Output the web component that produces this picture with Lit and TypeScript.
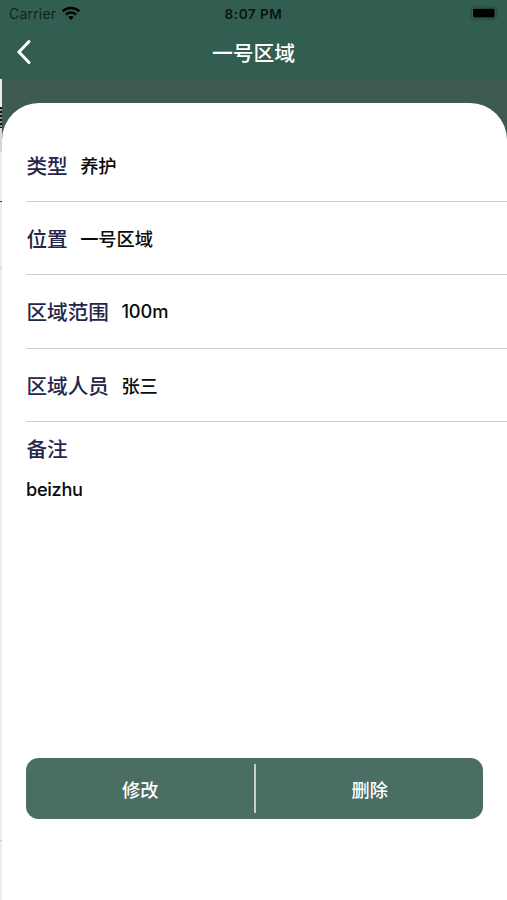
import { LitElement, html, css } from "lit";
import { customElement, property } from "lit/decorators.js";

@customElement("status-bar")
class StatusBar extends LitElement {
  static styles = css`
    :host {
      display: grid;
      grid-template-columns: 1fr auto 1fr;
      align-items: center;
      height: 27px;
      padding: 0 7px 0 9px;
      box-sizing: border-box;
      color: #0a1512;
      font-size: 14px;
    }
    .carrier {
      display: flex;
      align-items: center;
      gap: 5px;
      letter-spacing: 0.2px;
      color: #11241e;
    }
    .time {
      font-weight: 600;
      font-size: 13.6px;
      letter-spacing: 0.5px;
      margin: 0 2px 0 0;
    }
    .battery {
      justify-self: end;
      display: block;
    }
    svg {
      display: block;
    }
  `;
  render() {
    return html`
      <div class="carrier">
        <span>Carrier</span>
        <svg width="20" height="15" viewBox="0 0 20 15" fill="none" stroke="#000" stroke-width="2.5">
          <path d="M1.7 5.3C6.3 .9 13.7 .9 18.3 5.3" />
          <path d="M4.9 8.6C7.8 5.9 12.2 5.9 15.1 8.6" />
          <path d="M10 14 7.2 11.1C8.8 9.7 11.2 9.7 12.8 11.1Z" fill="#000" stroke="none" />
        </svg>
      </div>
      <div class="time">8:07 PM</div>
      <svg class="battery" width="31" height="15" viewBox="0 0 31 15">
        <rect x="2" y="0.9" width="25.6" height="12.6" rx="3.8" fill="none" stroke="#264f43" stroke-width="1.3" />
        <rect x="4" y="2.7" width="21.6" height="8.8" rx="1.4" fill="#000" />
        <path d="M29 5.2Q30.7 7 29 8.8Z" fill="#264f43" />
      </svg>
    `;
  }
}

@customElement("detail-row")
class DetailRow extends LitElement {
  @property() label = "";
  @property() value = "";
  static styles = css`
    :host {
      display: flex;
      align-items: center;
      gap: 12.5px;
      height: 73.35px;
      padding-left: 0.5px;
      box-sizing: border-box;
      border-bottom: 1.3px solid #cbcfcf;
    }
    .label {
      font-size: 20.6px;
      color: #26264c;
    }
    .value {
      font-size: 18.3px;
      letter-spacing: -0.1px;
      color: #0b0b0b;
    }
  `;
  render() {
    return html`<span class="label">${this.label}</span><span class="value">${this.value}</span>`;
  }
}

@customElement("app-root")
class AppRoot extends LitElement {
  static styles = css`
    :host {
      display: flex;
      flex-direction: column;
      height: 900px;
      overflow: hidden;
      background: #325e51;
      font-family: Inter, "Noto Sans CJK SC", sans-serif;
      font-weight: 500;
    }
    status-bar {
      font-weight: 400;
    }
    .nav {
      display: grid;
      grid-template-columns: 60px 1fr 60px;
      align-items: center;
      height: 52px;
      color: #fff;
      font-size: 20.8px;
      text-align: center;
    }
    .title {
      padding-bottom: 2px;
    }
    .back {
      display: block;
      margin: 0 0 2px 15px;
    }
    .body {
      flex: 1;
      display: flex;
      min-height: 0;
    }
    .edge {
      flex: 0 0 2px;
      background:
        linear-gradient(#333, #333) 0 122px / 2px 1px no-repeat,
        linear-gradient(#d0d0d0, #d0d0d0) 0 189px / 2px 1px no-repeat,
        linear-gradient(#d0d0d0, #d0d0d0) 0 761px / 2px 1px no-repeat,
        repeating-linear-gradient(#111 0 2px, #8a9590 2px 4px) 0 28px / 2px 21px no-repeat,
        linear-gradient(#d6d8d7, #d6d8d7) 0 49px / 2px 24px no-repeat,
        #ececec;
    }
    .backdrop {
      flex: 1;
      display: flex;
      padding-top: 24.3px;
      background: #3d5b51;
    }
    .sheet {
      flex: 1;
      display: flex;
      flex-direction: column;
      padding: 25.2px 0 0 24px;
      background: #fff;
      border-radius: 37px 37px 0 0;
    }
    .note-label {
      margin-top: 12px;
      padding-left: 0.5px;
      font-size: 20.6px;
      line-height: 31px;
      color: #26264c;
    }
    .note {
      margin-top: 12px;
      font-size: 18.2px;
      letter-spacing: -0.3px;
      line-height: 24px;
      color: #0b0b0b;
    }
    .actions {
      display: flex;
      align-items: center;
      height: 61px;
      margin: auto 24px 81px 0;
      border-radius: 12.5px;
      background: #4a6e64;
      color: #fff;
      font-size: 18.2px;
    }
    .action {
      flex: 1;
      padding-left: 1px;
      text-align: center;
    }
    .divider {
      width: 2px;
      height: 49px;
      background: #c4d0cc;
    }
  `;
  render() {
    const rows = [
      ["类型", "养护"],
      ["位置", "一号区域"],
      ["区域范围", "100m"],
      ["区域人员", "张三"],
    ];
    return html`
      <status-bar></status-bar>
      <div class="nav">
        <svg class="back" width="18" height="26" viewBox="0 0 18 26" fill="none" stroke="#fff"
          stroke-width="3" stroke-linecap="round" stroke-linejoin="miter">
          <path d="M14 2.5 4 13 14 23.5" />
        </svg>
        <span class="title">一号区域</span>
      </div>
      <div class="body">
        <div class="edge"></div>
        <div class="backdrop">
          <div class="sheet">
            ${rows.map(([l, v]) => html`<detail-row .label=${l} .value=${v}></detail-row>`)}
            <div class="note-label">备注</div>
            <div class="note">beizhu</div>
            <div class="actions">
              <span class="action">修改</span>
              <span class="divider"></span>
              <span class="action">删除</span>
            </div>
          </div>
        </div>
      </div>
    `;
  }
}
